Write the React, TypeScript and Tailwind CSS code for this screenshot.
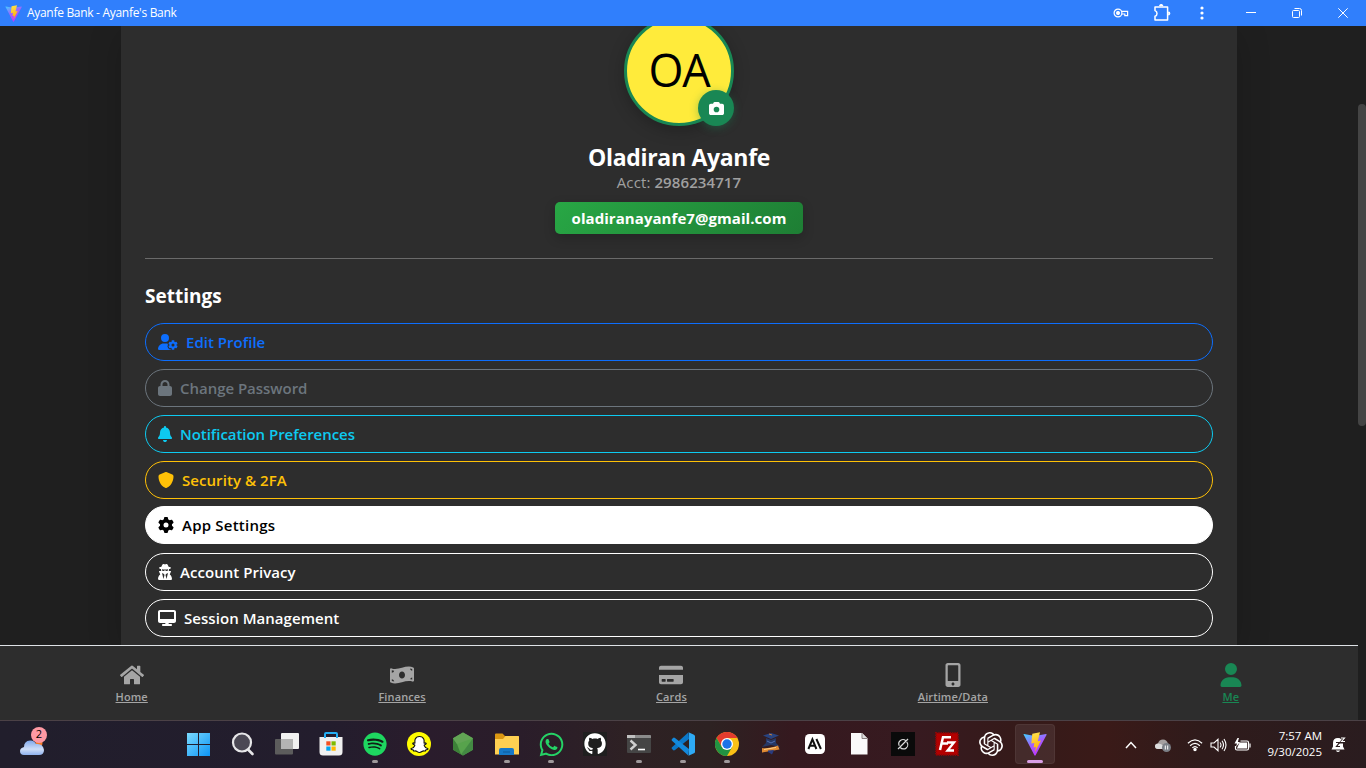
import React from 'react';
import { FaSpotify, FaSnapchatGhost, FaWhatsapp, FaGithub, FaHome, FaMoneyBillWave, FaCreditCard, FaMobileAlt } from 'react-icons/fa';
import { FaUserGear, FaLock, FaBell, FaShield, FaGear, FaUserSecret, FaDesktop, FaCamera, FaUser } from 'react-icons/fa6';
import { SiOpenai } from 'react-icons/si';

function ViteLogo({ className, id }: { className: string; id: string }) {
  return (
    <svg viewBox="0 0 24 24" className={className}>
      <defs>
        <linearGradient id={id + 'a'} x1="0" y1="0" x2="0.6" y2="1">
          <stop offset="0" stopColor="#41d1ff" />
          <stop offset="0.55" stopColor="#a45cff" />
          <stop offset="1" stopColor="#bd34fe" />
        </linearGradient>
        <linearGradient id={id + 'b'} x1="0.4" y1="0" x2="0.6" y2="1">
          <stop offset="0" stopColor="#ffe14a" />
          <stop offset="1" stopColor="#ffa800" />
        </linearGradient>
      </defs>
      <path d="M0.6 2.6 Q0 2 1 2 L12 4 L23 2 Q24 2 23.5 3 L12.6 23.3 Q12 24 11.4 23.3 Z" fill={`url(#${id}a)`} />
      <path d="M17 0.2 L9.3 1.7 L8.3 11.6 L11.3 11 L10.6 15.6 L13 15 L11.8 20.5 L18 8.6 L14.8 9.2 Z" fill={`url(#${id}b)`} />
    </svg>
  );
}

function TitleBar() {
  return (
    <header className="flex h-[26px] shrink-0 items-center bg-[#307ffc] pl-[5px] text-white">
      <ViteLogo id="tb" className="h-[17px] w-[17px]" />
      <span className="ml-[5px] whitespace-nowrap text-[12px] tracking-[-0.3px]">Ayanfe Bank - Ayanfe's Bank</span>
      <div className="ml-auto flex items-center">
        <svg viewBox="0 0 16 10" className="mr-[24px] h-[10px] w-4" fill="none" stroke="currentColor" strokeWidth="1.2">
          <circle cx="5" cy="5" r="3.9" />
          <circle cx="5" cy="5" r="1.4" fill="currentColor" />
          <path d="M8.4 3.4 H14.6 V7.6 H11.8 V6 H8.6" />
        </svg>
        <svg viewBox="0 0 18 18" className="mr-[29px] h-[18px] w-[18px]" fill="none" stroke="currentColor" strokeWidth="1.5" strokeLinejoin="round">
          <path d="M2 3 H14.6 V16 H2 V12.3 Q4 11.6 4 9.4 Q4 7.3 2 6.6 Z" />
          <path d="M6.6 2 Q8.2 -0.6 9.8 2 M15.4 8 Q17.8 9.5 15.4 11" fill="currentColor" />
        </svg>
        <svg viewBox="0 0 4 14" className="mr-[42px] h-[14px] w-1" fill="currentColor">
          <circle cx="2" cy="2" r="1.6" /><circle cx="2" cy="7" r="1.6" /><circle cx="2" cy="12" r="1.6" />
        </svg>
        <svg viewBox="0 0 10 10" className="mr-[36px] h-[10px] w-[10px]" stroke="currentColor"><path d="M0 4.5 H10" /></svg>
        <svg viewBox="0 0 10 10" className="mr-[36px] h-[10px] w-[10px]" fill="none" stroke="currentColor">
          <rect x="0.5" y="2.5" width="7" height="7" rx="1" />
          <path d="M2.5 0.5 H7.5 Q9.5 0.5 9.5 2.5 V7.5" />
        </svg>
        <svg viewBox="0 0 10 10" className="mr-[18px] h-[10px] w-[10px]" stroke="currentColor"><path d="M0.3 0.3 L9.7 9.7 M9.7 0.3 L0.3 9.7" /></svg>
      </div>
    </header>
  );
}

const settings = [
  { label: 'Edit Profile', Icon: FaUserGear, w: 'w-5', cls: 'border-[#0d6efd] text-[#0d6efd]', ls: 'tracking-[0.02px]' },
  { label: 'Change Password', Icon: FaLock, w: 'w-3.5', cls: 'border-[#6c757d] text-[#6c757d]', ls: 'tracking-[-0.03px]' },
  { label: 'Notification Preferences', Icon: FaBell, w: 'w-3.5', cls: 'border-[#0dcaf0] text-[#0dcaf0]', ls: 'tracking-[-0.04px]' },
  { label: 'Security & 2FA', Icon: FaShield, w: 'w-4', cls: 'border-[#ffc107] text-[#ffc107]', ls: 'tracking-[0.06px]' },
  { label: 'App Settings', Icon: FaGear, w: 'w-4', cls: 'border-white bg-white text-black -translate-y-px', ls: 'tracking-[0.22px]' },
  { label: 'Account Privacy', Icon: FaUserSecret, w: 'w-3.5', cls: 'border-white text-white', ls: 'tracking-[0.05px]' },
  { label: 'Session Management', Icon: FaDesktop, w: 'w-[18px]', cls: 'border-white text-white', ls: 'tracking-[0.05px]' },
];

function Profile() {
  return (
    <main className="mx-auto h-full w-[1116px] bg-[#2d2d2d] px-6 shadow-[0_8px_32px_rgba(0,0,0,0.18)]">
      <div className="flex flex-col items-center">
        <div className="relative -mt-[10px] h-[110px] w-[110px]">
          <div className="flex h-full w-full items-center justify-center rounded-full border-[3px] border-[#198754] bg-[#ffeb3b] pb-[2px] text-[45px] font-normal tracking-[-1.2px] text-black shadow-[0_4px_16px_rgba(0,0,0,0.25)]">
            OA
          </div>
          <div className="absolute bottom-0 right-0 flex h-9 w-9 items-center justify-center rounded-full bg-[#198754] text-white shadow-[0_2px_8px_rgba(25,135,84,0.4)]">
            <FaCamera className="h-[15px] w-[15px]" />
          </div>
        </div>
        <h1 className="mt-[17px] h-[29px] whitespace-nowrap text-[23px] font-bold leading-[29px] tracking-[-0.3px] text-white">Oladiran Ayanfe</h1>
        <p className="h-6 whitespace-nowrap text-[15px] leading-[21px] tracking-[0.1px] text-[#a0a0a0]">
          Acct: <span className="font-semibold">2986234717</span>
        </p>
        <div className="mt-[6px] flex h-8 w-[248px] items-center justify-center rounded-[5px] bg-linear-135 from-[#28a745] to-[#1e7e34] text-[15px] font-bold tracking-[0.06px] text-white shadow-[0_4px_12px_rgba(0,0,0,0.2)]">
          oladiranayanfe7@gmail.com
        </div>
      </div>
      <hr className="mt-6 border-[#6a6a6a]" />
      <h2 className="mt-[25px] h-6 text-[19px] font-bold leading-6 tracking-[0.02px] text-white">Settings</h2>
      <div className="mt-[15px] flex flex-col gap-2">
        {settings.map(({ label, Icon, w, cls, ls }) => (
          <button key={label} className={`flex h-[38px] items-center rounded-full border pl-3 text-[15px] font-semibold ${cls}`}>
            <Icon className={`mr-2 h-4 ${w}`} />
            <span className={`whitespace-nowrap ${ls}`}>{label}</span>
          </button>
        ))}
      </div>
    </main>
  );
}

const tabs = [
  { label: 'Home', Icon: FaHome, w: 'w-[33px]', cls: 'text-[#a5a5a5]' },
  { label: 'Finances', Icon: FaMoneyBillWave, w: 'w-[47px]', cls: 'text-[#a5a5a5]' },
  { label: 'Cards', Icon: FaCreditCard, w: 'w-[31px]', cls: 'text-[#a5a5a5]' },
  { label: 'Airtime/Data', Icon: FaMobileAlt, w: 'w-[71px]', cls: 'text-[#a5a5a5]' },
  { label: 'Me', Icon: FaUser, w: 'w-6', cls: 'text-[#198754]' },
];

function BottomNav() {
  return (
    <nav className="flex h-[75px] w-[1358px] shrink-0 justify-around border-t border-[#dee2e6] bg-[#2d2d2d] pt-[17px]">
      {tabs.map(({ label, Icon, w, cls }) => (
        <a key={label} className={`flex flex-col items-center ${w} ${cls}`}>
          <Icon className="h-6 w-6 shrink-0" />
          <span className="mt-[2px] whitespace-nowrap text-[11px] font-semibold leading-4 tracking-[0.12px] underline underline-offset-1">{label}</span>
        </a>
      ))}
    </nav>
  );
}

const apps: { name: string; run?: boolean; active?: boolean; icon: React.ReactNode }[] = [
  { name: 'start', icon: (
    <svg viewBox="0 0 24 24" className="h-6 w-6">
      <defs><linearGradient id="win" gradientUnits="userSpaceOnUse" x1="0" y1="0" x2="24" y2="24"><stop stopColor="#7ddcff" /><stop offset="1" stopColor="#0a93f5" /></linearGradient></defs>
      <path d="M0 1H11V12H0zM12 1H23V12H12zM0 13H11V24H0zM12 13H23V24H12z" fill="url(#win)" />
    </svg>) },
  { name: 'search', icon: (
    <svg viewBox="0 0 24 24" className="h-6 w-6" fill="#4b4854" stroke="#e6e6e8" strokeWidth="2.2" strokeLinecap="round"><path d="M17 17.5 L21.5 22" strokeWidth="2.6" /><circle cx="11" cy="10.5" r="9" /></svg>) },
  { name: 'views', icon: (
    <svg viewBox="0 0 24 24" className="h-6 w-6">
      <rect x="6" y="1" width="18" height="16" rx="1" fill="#f1f1f1" /><rect x="0" y="7" width="18" height="15.5" rx="1" fill="#5c5c5c" /><rect x="6" y="7" width="12" height="10" fill="#b3b3b3" />
    </svg>) },
  { name: 'store', icon: (
    <svg viewBox="0 0 24 24" className="h-6 w-6">
      <path d="M6 6 V2 Q6 1 7 1 H17 Q18 1 18 2 V6" fill="none" stroke="#25aef3" strokeWidth="2" />
      <path d="M0.5 5 H23.5 V20 Q23.5 23.5 20 23.5 H4 Q0.5 23.5 0.5 20 Z" fill="#f0f0f0" />
      <path d="M5 4 H7 V6 H5z M17 4 H19 V6 H17z" fill="#25aef3" />
      <path d="M7.3 9.3h4.2v4.2H7.3z" fill="#f25022" /><path d="M12.5 9.3h4.2v4.2h-4.2z" fill="#7fba00" /><path d="M7.3 14.5h4.2v4.2H7.3z" fill="#00a4ef" /><path d="M12.5 14.5h4.2v4.2h-4.2z" fill="#ffb900" />
    </svg>) },
  { name: 'music', run: true, icon: <span className="flex h-[22px] w-[22px] rounded-full bg-[#102016]"><FaSpotify className="-m-px h-6 w-6 shrink-0 text-[#1ed760]" /></span> },
  { name: 'chat', icon: <span className="flex h-6 w-6 items-center justify-center rounded-full bg-[#fffc00]"><FaSnapchatGhost className="h-[17px] w-[17px] overflow-visible text-white" stroke="#111" strokeWidth="34" /></span> },
  { name: 'node', icon: (
    <svg viewBox="0 0 24 24" className="h-6 w-6">
      <path d="M12 0.5 L22 6.2 V17.8 L12 23.5 L2 17.8 V6.2z" fill="#57a34c" /><path d="M2 6.2 L6 12 L10 22.4 L2 17.8z" fill="#3c8038" /><path d="M12 .5 L22 6.2 L6 12 L2 6.2z" fill="#62a455" /><path d="M22 6.2 V17.8 L12 23.5 L10 22.4z" fill="#438a43" />
    </svg>) },
  { name: 'files', run: true, icon: (
    <svg viewBox="0 0 24 24" className="h-6 w-6">
      <path d="M0 2.5 Q0 1.5 1 1.5 H7.5 L10 4 H23 Q24 4 24 5 V12 H0z" fill="#dc9712" />
      <path d="M0 7 H8 L10.5 4 H23 Q24 4 24 5 V22.5 H0z" fill="#ffd052" />
      <path d="M4 23 V18 Q4 16 6 16 H17 Q19 16 19 18 V23z" fill="#1678c8" /><path d="M8 20h7" stroke="#0d599b" />
    </svg>) },
  { name: 'whatsapp', run: true, icon: <FaWhatsapp className="h-[27px] w-[27px] text-[#25d366]" /> },
  { name: 'github', icon: <span className="flex h-6 w-6 items-center justify-center bg-[#1f1f1f]"><FaGithub className="h-[22px] w-[22px] text-white" /></span> },
  { name: 'terminal', run: true, icon: (
    <svg viewBox="0 0 24 24" className="h-6 w-6">
      <rect y="3" width="24" height="18" rx="1" fill="#454545" /><path d="M1 3H23Q24 3 24 4V6H0V4Q0 3 1 3z" fill="#8b8b8b" /><path d="M0 3h8v3H0z" fill="#c0c0c0" />
      <path d="M3.5 8.5 L8.5 13 L3.5 17.5" fill="none" stroke="#cfcfcf" strokeWidth="2.4" /><path d="M11 17.5 H18" stroke="#fff" strokeWidth="1.6" />
    </svg>) },
  { name: 'code', run: true, icon: (
    <svg viewBox="0 0 24 24" className="h-6 w-6">
      <path d="M17.5 .3 L1 15.3 Q0 16 1 17 L2.4 18.2 Q3 18.7 4 18 L18 7z" fill="#0b78c9" />
      <path d="M17.5 23.7 L1 8.7 Q0 8 1 7 L2.4 5.8 Q3 5.3 4 6 L18 17z" fill="#1389dc" />
      <path d="M17.5 .2 L23 2.7 Q24 3.2 24 4.2 V19.8 Q24 20.8 23 21.3 L17.5 23.8 Q18 23.5 18 22.5 V1.5 Q18 .7 17.5 .2z" fill="#2eaaf5" />
    </svg>) },
  { name: 'browser', run: true, icon: (
    <svg viewBox="0 0 24 24" className="h-6 w-6">
      <circle cx="12" cy="12" r="12" fill="#fbc116" />
      <path d="M1.6 6 A12 12 0 0 1 22.4 6 H12 L6.8 15z" fill="#e33b2e" />
      <path d="M1.6 6 A12 12 0 0 0 12 24 L17.2 15 L12 12 L6.8 15z" fill="#229342" />
      <circle cx="12" cy="12" r="6" fill="#fff" /><circle cx="12" cy="12" r="4.7" fill="#1a73e8" />
    </svg>) },
  { name: 'academy', icon: (
    <svg viewBox="0 0 24 24" className="h-6 w-6">
      <path d="M12 1 L20 3.5 L12 7 L4 3.5z" fill="#29437f" /><path d="M7 6 L12 8 L17 6 V11 L21 15 L12 13 L3 15 L7 11z" fill="#263865" /><path d="M10 2 L13 3" stroke="#c97d37" />
      <path d="M8 9 L12 11 L16 9" fill="none" stroke="#516fb3" /><path d="M3 16 Q9 17 19 13.5 L20.5 17.5 Q12 19 3 20.5z" fill="#e08a34" /><path d="M9 18.5 L15 18 L13 22.5 L9 20z" fill="#293b80" /><path d="M5 17.5 L17 15.5" stroke="#ffd085" />
    </svg>) },
  { name: 'ai', icon: (
    <svg viewBox="0 0 24 24" className="h-6 w-6">
      <rect x="2" y="2" width="20" height="20" rx="4.5" fill="#fff" />
      <path d="M5.4 17 L9.4 7.4 L13.4 17 M6.8 13.7 H12 M13.4 7 L17.9 17" fill="none" stroke="#111" strokeWidth="2" />
    </svg>) },
  { name: 'document', icon: (
    <svg viewBox="0 0 24 24" className="h-6 w-6"><path d="M4 1 H15 L20.5 6.5 V22.5 H4z" fill="#fafafa" /><path d="M15 1 V6.5 H20.5" fill="#ddd" stroke="#8a8080" /></svg>) },
  { name: 'orbit', icon: (
    <svg viewBox="0 0 24 24" className="h-6 w-6"><rect width="24" height="24" fill="#0a0a0a" /><g fill="none" stroke="#ddd" strokeWidth="1.2"><path d="M14.8 8.7 A4.2 4.2 0 0 0 8.3 13.8 M9.3 15.5 A4.2 4.2 0 0 0 15.7 10" /><path d="M7 17 L17 7" /></g></svg>) },
  { name: 'transfer', icon: (
    <svg viewBox="0 0 24 24" className="h-6 w-6"><rect x="1" y="1" width="22" height="22" fill="#b30000" stroke="#8e0606" strokeWidth="2" strokeDasharray="1.3 1" />
      <path d="M5 18 L8 5.2 H16 M6.5 11.5 H13" fill="none" stroke="#fff" strokeWidth="2.5" /><path d="M12 10.5 H19 L12.5 18.5 H19" fill="none" stroke="#fff" strokeWidth="2.3" /></svg>) },
  { name: 'gpt', icon: <SiOpenai className="h-6 w-6 text-white" /> },
  { name: 'bank', active: true, icon: <ViteLogo id="tk" className="h-6 w-6" /> },
];

function Taskbar() {
  return (
    <footer className="flex h-12 shrink-0 items-center border-t border-[#4b4146] bg-[linear-gradient(90deg,#211e2c_0%,#231d2d_24%,#2a1c2c_31%,#2a1d2a_38%,#2e2124_46%,#2d2222_52%,#35191f_58%,#371a20_67%,#351a19_75%,#3a1a18_81%,#2f1b1b_88%,#2a1c1f_100%)] text-white">
      <div className="relative ml-[19px] h-9 w-9 shrink-0">
        <svg viewBox="0 0 26 17" className="absolute left-0 top-[12px] h-[17px] w-[26px]">
          <defs><linearGradient id="cl" x1="0" y1="0" x2="0" y2="1"><stop stopColor="#7fa8ec" /><stop offset="0.6" stopColor="#cfdef8" /><stop offset="1" stopColor="#8fb2ee" /></linearGradient></defs>
          <circle cx="20" cy="4" r="3.5" fill="#f27b2a" />
          <path d="M5 16 Q1 16 1 12 Q1 9 5 8 Q5 2 11 1.5 Q15 1 17 5 Q24 4 25 11 Q25 16 20 16z" fill="url(#cl)" />
        </svg>
        <span className="absolute left-3 top-0 flex h-4 w-4 items-center justify-center rounded-full bg-[#ff99a4] text-[11px] text-black">2</span>
      </div>
      <div className="ml-[122px] flex h-full shrink-0">
        {apps.map((a) => (
          <div key={a.name} className="relative flex h-full w-11 items-center justify-center">
            {a.active && <span className="absolute inset-x-[2px] bottom-1 top-[3px] rounded border border-white/5 bg-white/8" />}
            <span className="relative mb-px flex">{a.icon}</span>
            {a.run && <span className="absolute bottom-[5px] h-[3px] w-1.5 rounded-full bg-[#9f999b]" />}
            {a.active && <span className="absolute bottom-[5px] h-[3px] w-4 rounded-full bg-[#da9fe6]" />}
          </div>
        ))}
      </div>
      <div className="ml-auto flex items-center">
        <svg viewBox="0 0 12 8" className="mr-[17px] h-2 w-3" fill="none" stroke="currentColor" strokeWidth="1.5"><path d="M1 7 L6 1.5 L11 7" /></svg>
        <svg viewBox="0 0 18 14" className="mr-[15px] h-[14px] w-[18px]">
          <path d="M4 11 Q1 11 1 8 Q1 6 4 5.5 Q5 1.5 9 1.5 Q13 1.5 14 6 L10 11z" fill="#a5a0a0" /><path d="M4 11 Q1 11 1 8 Q1 5.5 4.5 5.5 Q7 5.5 10 8 V11z" fill="#ddd" />
          <circle cx="12.5" cy="9.5" r="4.5" fill="#7b7f86" /><path d="M11.3 7.5v4M13.7 7.5v4" stroke="#fff" />
        </svg>
        <svg viewBox="0 0 18 14" className="mr-[7px] h-[14px] w-4" fill="none" stroke="currentColor" strokeWidth="1.3"><path d="M1 5 Q9 -2.5 17 5 M3.5 7.8 Q9 2.5 14.5 7.8 M6 10.3 Q9 7.3 12 10.3" /><circle cx="9" cy="12" r="1.3" fill="currentColor" /></svg>
        <svg viewBox="0 0 17 14" className="mr-[7px] h-[14px] w-[17px]" fill="none" stroke="currentColor" strokeWidth="1.1"><path d="M1 5 H4 L8 1.3 V12.7 L4 9 H1z M10 4.5 Q12 7 10 9.5 M12 2.8 Q15 7 12 11.2 M14 1 Q18 7 14 13" /></svg>
        <svg viewBox="0 0 17 14" className="mr-[7px] h-[14px] w-[17px]" fill="none" stroke="currentColor" strokeWidth="1.2"><path d="M6.5 3 H13 Q14.5 3 14.5 4.5 V10.5 Q14.5 12 13 12 H3 Q1.5 12 1.5 10.5 V8" /><path d="M6 5 H12.5 V10 H3.8z" fill="currentColor" /><path d="M3.5 0 L0.5 5.5 H3 L2 9 L6 4 H3.8 L5 0z" fill="currentColor" stroke="none" /><path d="M16 5.5v4" /></svg>
        <div className="-mt-[2px] w-16 whitespace-nowrap text-right text-[11.5px] leading-4 tracking-[0px]">
          <div>7:57 AM</div>
          <div>9/30/2025</div>
        </div>
        <svg viewBox="0 0 16 16" className="ml-[9px] mr-[19px] h-4 w-4">
          <path d="M7 1 Q2 1 2 6 V9.5 L0.5 12.5 H13.5 L12 9.5 V6 Q12 1 7 1z M4.8 13.5 H9.2 Q7 16.5 4.8 13.5z" fill="#fff" />
          <path d="M9.5 .5 H14 L10.5 5 H14.5" fill="none" stroke="#2b1c1e" strokeWidth="3" /><path d="M10 1 H13.5 L10.5 4.5 H14" fill="none" stroke="#fff" strokeWidth="1.1" /><path d="M5 5.5 H8.5 L5.5 9.5 H9" fill="none" stroke="#2b1c1e" strokeWidth="1.2" />
        </svg>
      </div>
    </footer>
  );
}

export default function App() {
  return (
    <div className="flex h-[768px] w-[1366px] flex-col overflow-hidden bg-[#1f1f1f] font-['Segoe_UI','Open_Sans',sans-serif]">
      <TitleBar />
      <div className="flex h-[694px] shrink-0">
        <div className="flex w-[1358px] flex-col">
          <div className="h-[619px] shrink-0 overflow-hidden">
            <Profile />
          </div>
          <BottomNav />
        </div>
        <div className="w-2 pt-[78px]">
          <div className="h-[322px] rounded-full bg-[#444]" />
        </div>
      </div>
      <Taskbar />
    </div>
  );
}
